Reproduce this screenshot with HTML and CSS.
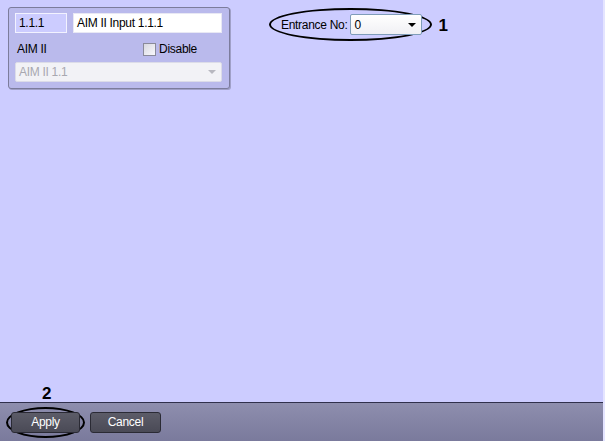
FILE: index.html
```html
<!DOCTYPE html>
<html lang="en">
<head>
    <meta charset="UTF-8">
    <title>AIM II Input settings</title>
    <link rel="stylesheet" href="styles.css">
</head>
<body>
    <div class="window">
        <div class="content">
            <div class="panel">
                <div class="row">
                    <div class="field field-id">1.1.1</div>
                    <div class="field field-name">AIM II Input 1.1.1</div>
                </div>
                <div class="row row-label">
                    <span class="label">AIM II</span>
                    <label class="check"><span class="box"></span>Disable</label>
                </div>
                <div class="combo combo-disabled">
                    <span>AIM II 1.1</span>
                    <span class="arrow"></span>
                </div>
            </div>

            <div class="entrance">
                <div class="callout callout-entrance">
                    <span class="label">Entrance No:</span>
                    <div class="combo combo-small">
                        <span>0</span>
                        <span class="arrow"></span>
                    </div>
                </div>
                <span class="mark">1</span>
            </div>
        </div>

        <div class="toolbar">
            <div class="callout callout-apply">
                <span class="mark mark-apply">2</span>
                <button class="btn">Apply</button>
            </div>
            <button class="btn btn-cancel">Cancel</button>
        </div>
    </div>
</body>
</html>
```

FILE: styles.css
```css
body {
    margin: 0;
    font-family: "Liberation Sans", Arial, sans-serif;
    font-size: 12px;
    color: #000;
    background-color: #ccccff;
}
.window {
    width: 605px;
    height: 441px;
    display: flex;
    flex-direction: column;
    border-right: 2px solid #e4e4ff;
    box-sizing: border-box;
}
.content {
    flex: 1;
    display: flex;
    align-items: flex-start;
    padding: 7px 8px;
}
.panel {
    width: 207px;
    padding: 5px 7px 6px 6px;
    background: #babaec;
    border: 1px solid #7c7c9c;
    border-radius: 3px;
    box-shadow: 1px 1px 0 #a0a0c8;
}
.row {
    display: flex;
    gap: 6px;
}
.field {
    height: 18px;
    line-height: 18px;
    padding: 0 3px;
    border: 1px solid #f2f2ff;
    letter-spacing: -0.3px;
}
.field-id {
    width: 44px;
    background: #ccccff;
}
.field-name {
    flex: 1;
    background: #fff;
    border-color: #e8e8f4;
}
.row-label {
    justify-content: space-between;
    align-items: center;
    margin-top: 9px;
    height: 14px;
    padding-left: 2px;
    padding-right: 25px;
}
.label {
    letter-spacing: -0.3px;
}
.check {
    display: flex;
    align-items: center;
    gap: 3px;
    letter-spacing: -0.3px;
}
.box {
    width: 11px;
    height: 11px;
    border: 1px solid #8a8a9a;
    background: linear-gradient(135deg, #d8d8e0, #f8f8fc);
}
.combo {
    display: flex;
    align-items: center;
    justify-content: space-between;
    height: 18px;
    padding: 0 5px 0 3px;
    background: #fff;
    border: 1px solid #8a8aa8;
    border-radius: 2px;
    letter-spacing: -0.3px;
}
.combo-disabled {
    margin-top: 6px;
    background: #f2f2f6;
    border-color: #dcdce8;
    color: #a8a8b0;
}
.arrow {
    width: 0;
    height: 0;
    border-left: 4px solid transparent;
    border-right: 4px solid transparent;
    border-top: 4px solid #000;
}
.combo-disabled .arrow {
    border-top-color: #b8b8c0;
}
.entrance {
    display: flex;
    align-items: center;
    margin-left: 39px;
    margin-top: 1px;
}
.callout {
    border: 2px solid #000;
    border-radius: 50%;
}
.callout-entrance {
    display: flex;
    align-items: center;
    gap: 3px;
    padding: 4px 8px 4px 10px;
}
.combo-small {
    width: 62px;
    height: 19px;
    border-color: #7f9db9;
    background: linear-gradient(#ffffff, #f0f0f4);
}
.mark {
    font-size: 17px;
    font-weight: bold;
    margin-left: 6px;
    margin-top: 2px;
}
.toolbar {
    position: relative;
    height: 38px;
    display: flex;
    align-items: center;
    gap: 5px;
    padding-left: 6px;
    border-top: 1px solid #30304c;
    background: linear-gradient(#8e8eae, #7a7a9c);
}
.callout-apply {
    position: relative;
    padding: 3px 3px;
}
.mark-apply {
    position: absolute;
    left: 34px;
    top: -25px;
    margin: 0;
}
.btn {
    width: 69px;
    height: 21px;
    padding: 0;
    font-family: "Liberation Sans", Arial, sans-serif;
    font-size: 12px;
    letter-spacing: -0.3px;
    color: #fff;
    background: linear-gradient(#5c5c68, #4a4a56);
    border: 1px solid #2a2a34;
    border-radius: 3px;
}
.btn-cancel {
    width: 71px;
}
```
